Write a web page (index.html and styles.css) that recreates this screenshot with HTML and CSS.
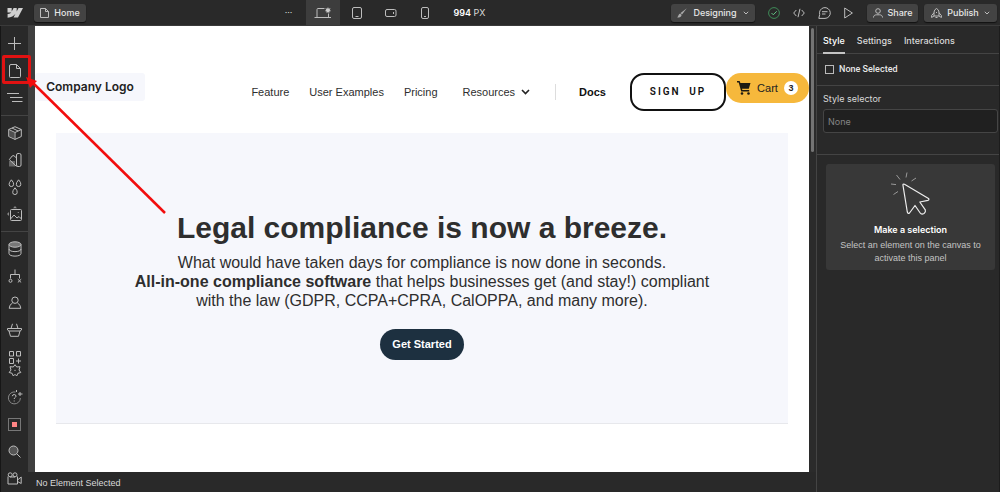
FILE: index.html
```html
<!DOCTYPE html>
<html lang="en">
<head>
<meta charset="utf-8">
<title>Designer</title>
<link rel="stylesheet" href="styles.css">
</head>
<body>
<div class="app">
  <header class="topbar">
    <a class="brand" href="#" aria-label="Dashboard"><svg width="16" height="10" viewBox="0 0 16 10"><path fill="#d0d0d0" d="M16 0 L11 9.6 H6.5 L8.5 5.8 C6.800 8 4.300 9.400 0.600 9.700 V6 C3 5.800 4.300 4.500 4.300 4.500 H0.500 V0 H4.700 V3.400 L6.600 0 H9.700 V3.400 L11.500 0 Z"/></svg></a>
    <button class="chip home"><svg width="9" height="10" viewBox="0 0 9 10" class="ic"><path d="M1 .5h4.500L8.500 3.500V9.500H.5V.5zM5.500 .5v3h3"/></svg>Home</button>
    <div class="viewport">
      <button class="tool" aria-label="More">···</button>
      <button class="tool active" aria-label="Desktop"><svg width="18" height="12" viewBox="0 0 18 12" class="ic"><path d="M3 10V2.500Q3 1.500 4 1.500H10.500M14.500 6.500V10M.5 10.500H17"/><path fill="#ccc" stroke="none" d="m14 0 .7 1.700 1.900-.4-1 1.600 1.500 1.200-1.900.3.100 1.900-1.300-1.300-1.400 1.300.1-1.900-1.900-.3 1.500-1.200-1-1.600 1.900.4z"/></svg></button>
      <button class="tool" aria-label="Tablet"><svg width="10" height="12" viewBox="0 0 10 12" class="ic"><rect x=".5" y=".5" width="9" height="11" rx="1.500"/><path d="M3.500 9.500h3"/></svg></button>
      <button class="tool" aria-label="Mobile landscape"><svg width="12" height="8" viewBox="0 0 12 8" class="ic"><rect x=".5" y=".5" width="10.500" height="7" rx="1.500"/><path d="M8.500 3v2"/></svg></button>
      <button class="tool" aria-label="Mobile portrait"><svg width="8" height="12" viewBox="0 0 8 12" class="ic"><rect x=".5" y=".5" width="7" height="11" rx="1.500"/><path d="M3 9.500h2"/></svg></button>
      <span class="size"><b>994</b> PX</span>
    </div>
    <div class="actions">
      <button class="chip mode"><svg width="10" height="10" viewBox="0 0 10 10"><path fill="#aaa" d="M9.800 .2 5 6.400 3.600 5zM3.200 5.500 4.600 6.900C4.300 8.800 2.500 9.600.2 9.500 1.400 8.700 1.200 6 3.200 5.500z"/></svg>Designing<svg width="6" height="4" viewBox="0 0 6 4" class="ic"><path d="m.8.8 2.200 2.200L5.200.8"/></svg></button>
      <button class="plain" aria-label="Status"><svg width="12" height="12" viewBox="0 0 12 12" class="ic"><circle cx="6" cy="6" r="5.400" stroke="#3f8a58"/><path stroke="#62c483" d="m3.500 6 1.800 1.800L8.700 4.300"/></svg></button>
      <button class="plain" aria-label="Code"><svg width="12" height="10" viewBox="0 0 12 10" class="ic"><path d="M3.300 2 .7 5l2.600 3M8.700 2l2.600 3-2.600 3M7 .8 5 9.200"/></svg></button>
      <button class="plain" aria-label="Comments"><svg width="13" height="12" viewBox="0 0 13 12" class="ic"><path d="M.8 11.400H7A5.400 5.400 0 1 0 1.700 7.500zM4 4.700h5.500M4 7h3.500"/></svg></button>
      <button class="plain" aria-label="Preview"><svg width="9" height="12" viewBox="0 0 9 12" class="ic"><path d="M.7 1v10L8.400 6z"/></svg></button>
      <button class="chip share"><svg width="10" height="10" viewBox="0 0 10 10" class="ic"><circle cx="5" cy="3" r="2.300"/><path d="M.5 9.500C.5 7.500 2 6.800 3.500 6.800h3C8 6.800 9.500 7.500 9.500 9.500"/></svg>Share</button>
      <button class="chip publish"><svg width="11" height="10" viewBox="0 0 11 10" class="ic"><path d="M3 8V4Q3.300 1.500 5.500.5 7.700 1.500 8 4V8zM3 4.800.6 7.500v2L3 8M8 4.800l2.400 2.700v2L8 8M4.500 9.500h2M5.500 4v1"/></svg>Publish<svg width="6" height="4" viewBox="0 0 6 4" class="ic"><path d="m.8.8 2.200 2.200L5.200.8"/></svg></button>
    </div>
  </header>

  <nav class="rail" aria-label="Tools">
    <button aria-label="Add"><svg width="13" height="13" viewBox="0 0 13 13" class="ic"><path d="M6.500 0v13M0 6.500h13"/></svg></button>
    <button class="pages" aria-label="Pages"><svg width="14" height="14" viewBox="0 0 14 14" class="ic"><path d="M3 .5h5.500L12.500 4.500V12.500Q12.500 13.500 11.500 13.500H2.500Q1.500 13.500 1.500 12.500V2Q1.500.5 3 .5M8.500.5v4h4"/></svg>
      <span class="callout"></span>
      <svg class="arrow" width="142" height="140" viewBox="0 0 142 140"><path d="M139 137 6 6" stroke="#f20d0d" stroke-width="2.500"/><path d="M0 1 11 5 4 12z" fill="#f20d0d"/></svg></button>
    <button aria-label="Navigator"><svg width="16" height="10" viewBox="0 0 16 10" class="ic"><path d="M0 .5h12M3 4.500h12.500M5 8.500h10.500"/></svg></button>
    <hr>
    <button aria-label="Components"><svg width="14" height="14" viewBox="0 0 14 14" class="ic"><path d="M7 .7 13.300 3.500v7L7 13.400.7 10.500v-7zM.7 3.500 7 6.500l6.300-3M7 6.500v7M4 2l6.200 3"/><path fill="#777" fill-opacity=".5" stroke="none" d="m1 4 6 2.500V13L1 10z"/></svg></button>
    <button aria-label="Variables"><svg width="14" height="14" viewBox="0 0 14 14" class="ic"><path fill="#666" stroke="none" d="M1 8h6v5.500H1z"/><rect x="8.500" y=".5" width="4.500" height="13" rx="1.500"/><path d="M8.500 5 6 2.800Q5 2.200 4.200 3L1.300 6.600l7.200 6.900M10.700 10.800h.1"/></svg></button>
    <button aria-label="Styles"><svg width="14" height="16" viewBox="0 0 14 16" class="ic"><path d="M3.400.8Q6 3.800 5.600 5.300a2.200 2.200 0 0 1-4.500 0Q.9 3.800 3.400.8zM10.600.8q2.600 3 2.200 4.500a2.200 2.200 0 0 1-4.500 0Q8.100 3.800 10.600.8zM7 8.800q2.600 3 2.200 4.500a2.200 2.200 0 0 1-4.500 0Q4.500 11.800 7 8.800z"/></svg></button>
    <button aria-label="Assets"><svg width="16" height="16" viewBox="0 0 16 16" class="ic"><path fill="#888" stroke="none" d="m8 0 2 2.200H6zM0 8l2-2v4z"/><rect x="3.500" y="3.500" width="11" height="11" rx="1"/><path d="m3.500 13 3.500-4 3 3 2-1.500 2.500 2.500M10.800 6.500h.8"/></svg></button>
    <hr>
    <button aria-label="CMS"><svg width="14" height="16" viewBox="0 0 14 16" class="ic"><ellipse cx="7" cy="3.500" rx="6" ry="2.700" fill="#777"/><path d="M1 3.500v9C1 16 13 16 13 12.500v-9M1 8c0 3.500 12 3.500 12 0"/></svg></button>
    <button aria-label="Logic"><svg width="14" height="14" viewBox="0 0 14 14" class="ic"><path d="M7 .5v5M2.500 9.500V5.500h9v4M9.800 10.200l3.400 3.300m0-3.300-3.400 3.300"/><circle cx="2.500" cy="11.800" r="1.500"/></svg></button>
    <button aria-label="Users"><svg width="14" height="14" viewBox="0 0 14 14" class="ic"><circle cx="7" cy="4.200" r="3.200"/><path d="M4.500 7Q1.200 8.800 1.200 12.300h11.600Q12.800 8.800 9.500 7"/></svg></button>
    <button aria-label="Ecommerce"><svg width="15" height="14" viewBox="0 0 15 14" class="ic"><path d="M.5 5.500h14v1.500L13 8H2L.5 7zM2 8l1.500 5.300h8L13 8M4 5.500 5.500.8M11 5.500 9.500.8"/></svg></button>
    <button class="apps" aria-label="Apps"><svg width="14" height="13" viewBox="0 0 14 13" class="ic"><path d="M1.500.5h4v4.500h-4zM8.500.5h4v4.500h-4zM1.500 7.500h4v5h-4zM10.500 7.500v5M8 10h5"/></svg></button>
    <button class="gear" aria-label="Settings"><svg width="14" height="13" viewBox="0 0 14 13" class="ic"><path d="M7 .7 8.700 3 12 2.700 11 6l1.800 2.500-2.900.8L8.700 12 7 10.300 5.300 12 4.100 9.300l-2.900-.8L3 6 2 2.700 5.300 3zM7 5.800v1.200"/></svg></button>
    <button aria-label="Help"><svg width="16" height="15" viewBox="0 0 16 15" class="ic"><path stroke="#888" d="M8.500 2A6 6 0 1 0 13.400 8"/><path d="M5.300 6.200q.2-1.700 1.900-1.700T9 6.200C9 7.500 7.200 7.300 7.200 9M7.200 10.500v1M13 2v4M11 4h4.500M9.500 0v2"/></svg></button>
    <button aria-label="Record"><svg width="13" height="13" viewBox="0 0 13 13" class="ic"><rect x=".5" y=".5" width="12" height="12" stroke="#777"/><path fill="#ff8585" stroke="none" d="M4 4h5v5H4z"/></svg></button>
    <button aria-label="Search"><svg width="13" height="13" viewBox="0 0 13 13" class="ic"><circle cx="5.500" cy="5.500" r="4.500" fill="#555"/><path d="m8.700 8.700 3.800 3.800"/></svg></button>
    <button aria-label="Video"><svg width="15" height="13" viewBox="0 0 15 13" class="ic"><circle cx="3.200" cy="2.800" r="2"/><circle cx="8" cy="2.800" r="2"/><path d="M1 4.500v7.500h9.500V4.500M10.500 8l3.700-3v6.500l-3.700-2M3 5h5"/></svg></button>
  </nav>

  <main class="stage">
    <div class="canvas">
      <div class="site-head">
        <a class="logo" href="#">Company Logo</a>
        <nav class="site-nav">
          <a href="#">Feature</a><a href="#">User Examples</a><a href="#">Pricing</a>
          <a class="more" href="#">Resources<svg width="9" height="6" viewBox="0 0 9 6"><path d="m1 1 3.500 3.500L8 1" fill="none" stroke="#222" stroke-width="1.600"/></svg></a>
          <a class="docs" href="#">Docs</a>
        </nav>
        <a class="signup" href="#">SIGN UP</a>
        <button class="cart"><svg width="14" height="14" viewBox="0 0 14 14"><path fill="#1d1a12" d="M0 0h2.600l.8 2H13.500L11.800 7.800H5l.4 1.200h6.800v1.500H4.200L1.700 1.500H0z"/><circle cx="5" cy="12.500" r="1.300" fill="#1d1a12"/><circle cx="11.500" cy="12.500" r="1.300" fill="#1d1a12"/></svg>Cart<span class="count">3</span></button>
      </div>
      <section class="hero">
        <h1>Legal compliance is now a breeze.</h1>
        <p>What would have taken days for compliance is now done in seconds.<br><b>All-in-one compliance software</b> that helps businesses get (and stay!) compliant<br>with the law (GDPR, CCPA+CPRA, CalOPPA, and many more).</p>
        <a class="cta" href="#">Get Started</a>
      </section>
    </div>
    <div class="scroll"><div class="thumb"></div></div>
  </main>
  <footer class="status">No Element Selected</footer>

  <aside class="panel">
    <div class="tabs" role="tablist">
      <button role="tab" aria-selected="true" class="on">Style</button>
      <button role="tab" aria-selected="false">Settings</button>
      <button role="tab" aria-selected="false">Interactions</button>
    </div>
    <label class="selected"><input type="checkbox">None Selected</label>
    <div class="selector">
      <label for="sel">Style selector</label>
      <input id="sel" type="text" placeholder="None">
    </div>
    <div class="empty">
      <svg width="42" height="46" viewBox="0 0 42 46" fill="none"><g stroke="#999"><path d="M6.500 4 10 8.500M17 1.500 16 6.500M26 7l-4.500 3M1 13l5 .6M8 20.500 3.500 23.500"/></g><path stroke="#eee" stroke-width="1.200" stroke-linejoin="round" d="M13 14.500Q12.500 12.500 14.500 13.300L38.500 27.500Q39.500 28.700 38 29.300L29.800 31 35.300 38.800Q36 41 34 42.500 31.500 43.800 30.200 42L25 34.500 19.500 42Q18 43.200 17.300 41z"/></svg>
      <h2>Make a selection</h2>
      <p>Select an element on the canvas to activate this panel</p>
    </div>
  </aside>
</div>
</body>
</html>
```
FILE: styles.css
```css
* { box-sizing: border-box; }
body { margin: 0; background: #292929; color: #d9d9d9; font: 9px/13px Inter, "Liberation Sans", sans-serif; }
button { margin: 0; padding: 0; border: 0; background: none; color: inherit; font: inherit; }
a { color: inherit; text-decoration: none; }
svg { display: block; flex: none; }
.ic { fill: none; stroke: #bdbdbd; stroke-width: 1; }

.app { display: grid; min-height: 100vh; grid-template: 26px 1fr 20px / 28px minmax(0, 1fr) 184px; }

.topbar { grid-column: 1 / -1; display: flex; align-items: center; border-bottom: 1px solid #3a3a3a; padding-right: 3px; }
.brand { width: 28px; padding-left: 7px; }
.chip { display: flex; align-items: center; justify-content: center; gap: 5px; height: 18px; border-radius: 3px; background: #434343; box-shadow: 0 1px 1px #111; color: #e6e6e6; font-weight: 500; }
.home { width: 52px; margin-left: 6px; }
.viewport { flex: 1; display: flex; align-items: center; align-self: stretch; justify-content: center; }
.tool { width: 34px; align-self: stretch; display: flex; align-items: center; justify-content: center; }
.active { background: #3d3d3d; }
.size { margin-left: 12px; font-size: 9px; }
.size b { color: #fff; font-weight: 600; }
.actions { display: flex; align-items: center; gap: 13px; }
.mode { width: 84px; gap: 6px; }
.share { width: 51px; margin-left: 1px; }
.publish { width: 73px; margin-left: -7px; }

.rail { grid-row: 2 / 4; display: flex; flex-direction: column; padding-top: 4px; border-left: 1px solid #161616; }
.rail button { height: 27px; display: flex; align-items: center; justify-content: center; }
.rail hr { width: 100%; height: 1px; margin: 4px 0; border: 0; background: #444; }
.rail hr + button { margin-top: -1px; }
.pages { position: relative; }
.rail .apps { height: 21px; align-items: flex-end; }
.rail .gear { height: 20px; align-items: flex-start; }
.callout { position: absolute; inset: -2px -3px 0 1px; border: 3px solid #e11212; border-radius: 2px; }
.arrow { position: absolute; left: 25px; top: 19px; z-index: 2; pointer-events: none; }

.stage { display: flex; background: #3f3f3f; padding-left: 7px; }
.canvas { flex: 1; min-width: 0; background: #fff; color: #2e2e2e; font-family: "Liberation Sans", Arial, sans-serif; padding-top: 47px; }
.scroll { width: 7px; padding: 2px; background: #2b2b2b; }
.thumb { height: 124px; border-radius: 2px; background: #747474; }
.status { padding: 5px 8px 0; font-family: "Liberation Sans", Arial, sans-serif; }

.site-head { display: flex; align-items: flex-start; font-size: 11px; line-height: 14px; }
.logo { width: 110px; padding: 7px 0; text-align: center; border-radius: 3px; background: #f6f7fc; color: #222; font: 600 12px/14px Inter, sans-serif; }
.site-nav { flex: 1; display: flex; align-items: center; justify-content: flex-end; gap: 20px; height: 37px; padding-right: 24px; }
.more { display: flex; align-items: center; gap: 6px; margin: 0 5px; }
.docs { padding: 1px 0 1px 23px; border-left: 1px solid #ddd; color: #111; font-weight: 700; }
.signup { width: 96px; height: 38px; line-height: 34px; border: 2px solid #111; border-radius: 14px; text-align: center; color: #111; font-family: Roboto, sans-serif; font-size: 10px; font-weight: 600; letter-spacing: 2px; word-spacing: 4px; }
.cart { display: flex; align-items: center; justify-content: center; gap: 6px; width: 83px; height: 30px; border-radius: 15px; background: #f6b83c; color: #222; }
.count { width: 14px; height: 14px; border-radius: 7px; background: #fff; font-size: 9px; font-weight: 700; }

.hero { margin: 22px 21px 0; height: 291px; border-bottom: 1px solid #e7e8ec; background: #f6f7fc; text-align: center; padding-top: 78px; }
.hero h1 { margin: 0 0 8px; font-size: 30px; line-height: 34px; }
.hero p { margin: 0 0 19px; font-size: 16px; line-height: 19px; }
.cta { display: inline-block; padding: 8px 12px; border-radius: 16px; background: #1d3040; color: #fff; font-size: 11px; font-weight: 700; line-height: 15px; }

.panel { grid-column: 3; grid-row: 2 / 4; border-left: 1px solid #444; border-right: 1px solid #1c1c1c; }
.tabs { display: flex; gap: 12px; height: 28px; padding: 0 6px; border-bottom: 1px solid #444; font-weight: 500; }
.tabs button { height: 28px; padding-top: 2px; border-bottom: 2px solid transparent; }
.tabs .on { border-color: #c4c4c4; color: #fff; }
.selected { display: flex; align-items: center; gap: 5px; height: 32px; padding-left: 8px; border-bottom: 1px solid #444; color: #e8e8e8; font-family: Roboto, sans-serif; font-weight: 500; }
.selected input { appearance: none; width: 9px; height: 9px; margin: 0; border: 1px solid #bbb; }
.selector { padding: 6px 1px 21px 6px; border-bottom: 1px solid #444; }
.selector input { display: block; width: 100%; height: 24px; margin-top: 4px; padding: 0 4px; border: 1px solid #454545; border-radius: 3px; background: #202020; color: #ccc; font: inherit; }
.selector input::placeholder { color: #858585; }
.empty { margin: 9px 4px 0 9px; height: 106px; padding: 7px 8px; border-radius: 3px; background: #383838; text-align: center; color: #c4c4c4; }
.empty svg { margin: 0 auto 6px; }
.empty h2 { margin: 0 0 3px; font-size: 9px; line-height: 13px; font-weight: 600; color: #fff; }
.empty p { margin: 0; font-family: "Liberation Sans", Arial, sans-serif; }
```
